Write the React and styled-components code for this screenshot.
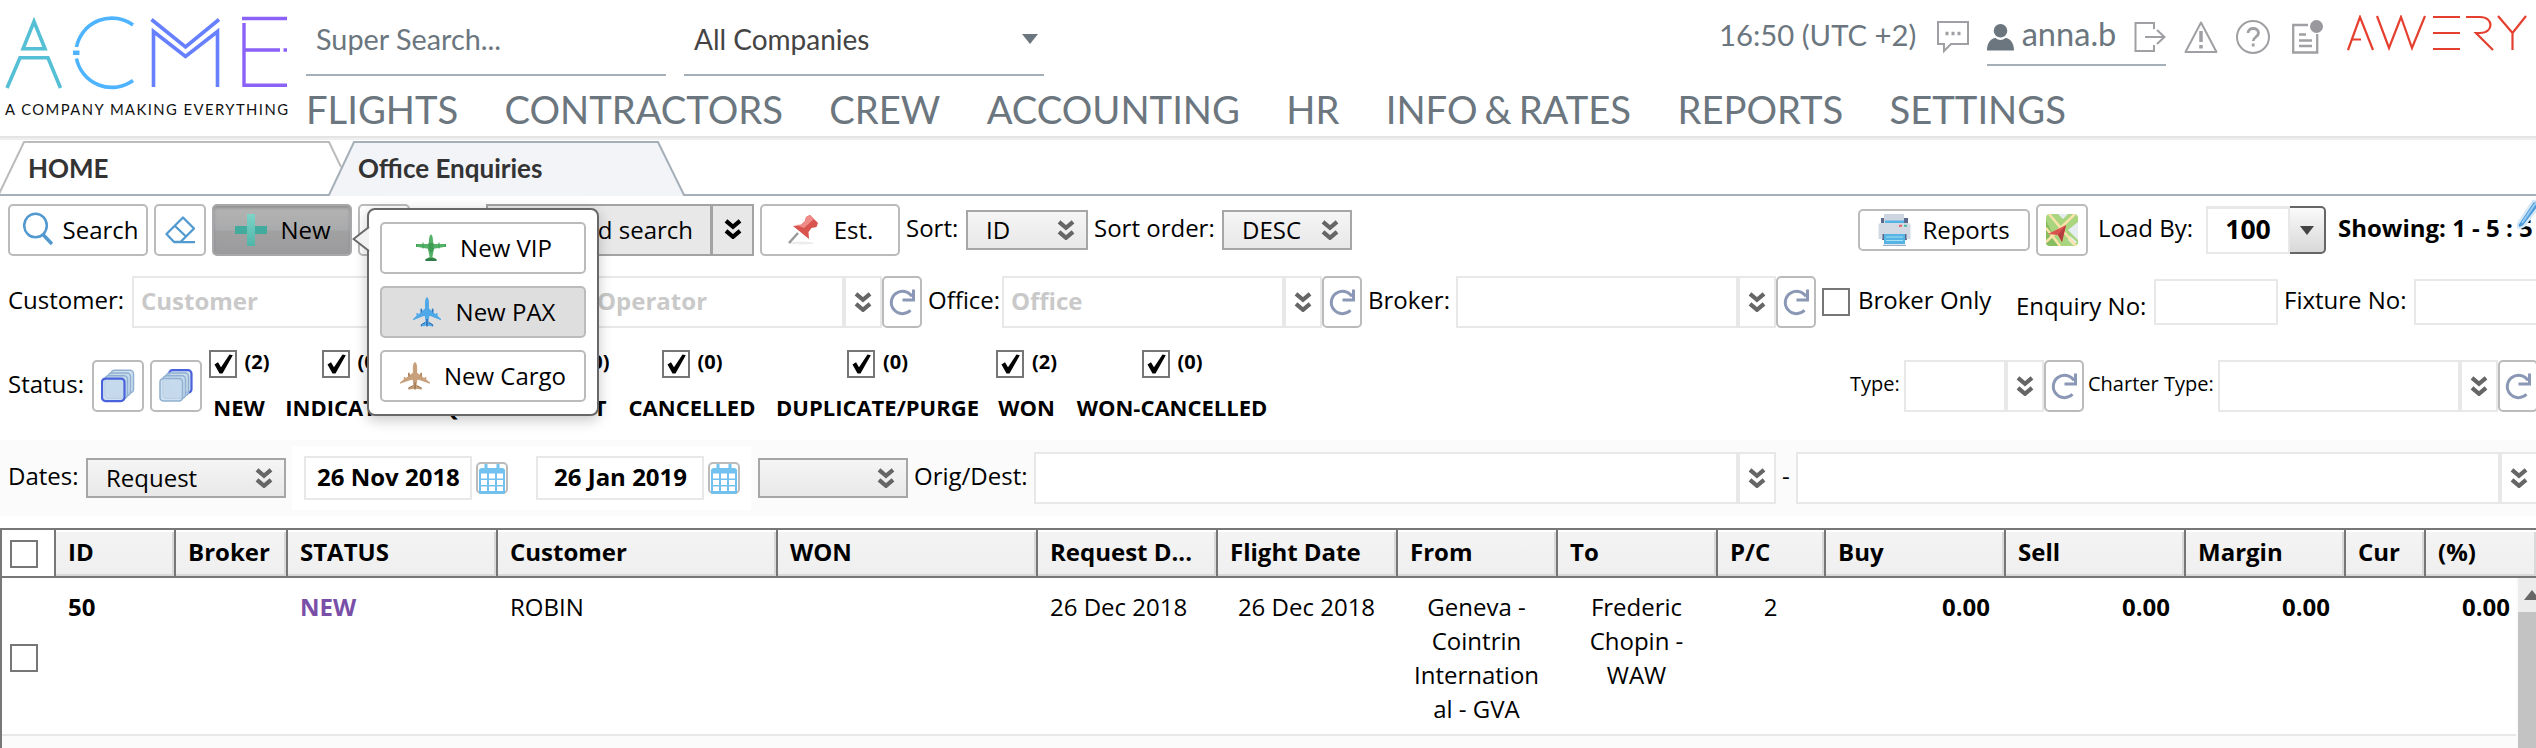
import styled, { createGlobalStyle, css } from "styled-components";

const GlobalStyle = createGlobalStyle`
    * {
        box-sizing: border-box;
    }
    body {
        margin: 0;
        background: #fff;
        color: #000;
        font-family: "Open Sans", "Noto Sans", sans-serif;
        font-size: 24px;
        overflow: hidden;
    }
    svg {
        display: block;
        flex: none;
    }
`;

const Page = styled.div`
    width: 2536px;
    height: 748px;
    overflow: hidden;
    display: flex;
    flex-direction: column;
`;

/* ---------- header ---------- */

const Header = styled.header`
    flex: none;
    display: flex;
    height: 140px;
    border-bottom: 2px solid #efefef;
    box-shadow: inset 0 -2px 0 #e4e4e4;
    font-family: Lato, sans-serif;
    color: #6b767e;
`;

const HeaderMain = styled.div`
    flex: 1;
    display: flex;
    flex-direction: column;
`;

const HeaderTop = styled.div`
    display: flex;
    height: 76px;
`;

const Field = styled.div`
    display: flex;
    align-items: center;
    justify-content: space-between;
    width: 360px;
    height: 76px;
    margin-right: 18px;
    padding: 4px 6px 0 10px;
    border-bottom: 2px solid #a5afb8;
    font-size: ${(p) => (p.$dark ? 28 : 28.8)}px;
    color: ${(p) => (p.$dark ? "#444" : "#6b767e")};
`;

const UserBar = styled.div`
    display: flex;
    margin-left: auto;
    padding-right: 9px;
    height: 66px;
    font-size: 29.3px;
`;

const Clock = styled.span`
    margin-top: 17px;
    line-height: 36px;
    width: 217px;
    white-space: nowrap;
`;

const User = styled.div`
    display: flex;
    justify-content: space-between;
    width: 179px;
    height: 66px;
    margin: 0 18px 0 17px;
    border-bottom: 2px solid #a5afb8;
`;

const UserName = styled.span`
    margin: 16px 0 0 -10px;
    font-size: 32.6px;
    line-height: 36px;
`;

const IconSlot = styled.div`
    width: ${(p) => p.$w}px;
    margin-right: ${(p) => p.$mr || 0}px;
    padding-top: ${(p) => p.$pt || 20}px;
`;

const Nav = styled.nav`
    display: flex;
    gap: 46.4px;
    font-size: 38.2px;
    line-height: 48px;
    margin-top: 9px;
    word-spacing: -2.8px;
    white-space: nowrap;
`;

const Tabs = styled.div`
    flex: none;
    position: relative;
    display: flex;
    height: 56px;
    font: 700 26px/30px Lato, sans-serif;
    color: #333;
    svg {
        position: absolute;
        left: 0;
        top: 0;
    }
`;

const Tab = styled.div`
    position: relative;
    width: ${(p) => p.$w}px;
    padding: 13px 0 0 28px;
`;

/* ---------- filter controls ---------- */

const Row = styled.div`
    flex: none;
    display: flex;
    align-items: center;
    height: ${(p) => p.$h}px;
    padding-left: 8px;
    ${(p) => p.$tint && "background: #fbfbfb;"}
    > * {
        flex: none;
    }
`;

const Label = styled.span`
    width: ${(p) => p.$w}px;
    margin-left: ${(p) => p.$ml || 0}px;
    padding-bottom: ${(p) => (p.$low ? 0 : 6)}px;
    ${(p) => p.$low && "padding-top: 6px;"}
    font-size: ${(p) => (p.$small ? 20 : 24)}px;
    white-space: nowrap;
`;

const Button = styled.button`
    display: flex;
    align-items: center;
    justify-content: center;
    gap: ${(p) => p.$gap || 0}px;
    width: ${(p) => p.$w}px;
    height: ${(p) => p.$h || 52}px;
    margin: 0 0 0 ${(p) => p.$ml || 0}px;
    padding: 0 0 1px ${(p) => p.$pl || 0}px;
    border: 2px solid #bbb;
    border-radius: 5px;
    background: #fff;
    color: #000;
    font: inherit;
    white-space: nowrap;
    ${(p) => p.$hover && "background: #dedede;"}
    ${(p) =>
        p.$pressed &&
        css`
            background: linear-gradient(#b4b4b4, #a9aaab 50%, #a1a1a2 52%, #9b9b9d);
            border-color: #a8a8aa;
            box-shadow: inset 0 2px 3px #8e8e90;
        `}
`;

const Select = styled.div`
    display: flex;
    align-items: center;
    justify-content: space-between;
    width: ${(p) => p.$w}px;
    height: 40px;
    margin-left: ${(p) => p.$ml || 0}px;
    padding: 0 11px 1px 18px;
    border: 2px solid #a6a6a6;
    background: linear-gradient(#f5f5f5, #e8e8e8);
`;

const SplitButton = styled.div`
    display: flex;
    margin-left: 76px;
    height: 52px;
    border: 2px solid #a3a3a3;
    background: #e8e8e8;
`;

const SplitPart = styled.div`
    display: flex;
    align-items: center;
    justify-content: center;
    width: ${(p) => p.$w}px;
    padding: 0 2px 2px 0;
    & + & {
        padding-right: 0;
        border-left: 3px solid #a3a3a3;
    }
`;

const Input = styled.div`
    display: flex;
    align-items: center;
    width: ${(p) => p.$w}px;
    height: ${(p) => p.$h || 52}px;
    margin-left: ${(p) => p.$ml || 0}px;
    padding: 0 0 3px ${(p) => p.$pl || 7}px;
    border: 2px solid #e8e8e8;
    background: #fff;
    font-weight: 700;
    white-space: nowrap;
    color: ${(p) => (p.$date ? "#000" : "#c9c9c9")};
`;

const Trigger = styled.div`
    display: flex;
    align-items: center;
    justify-content: center;
    width: 38px;
    height: 52px;
    padding-bottom: 1px;
    border: 2px solid #e8e8e8;
    background: #fff;
`;

const Check = styled.div`
    flex: none;
    width: 28px;
    height: 28px;
    margin-left: ${(p) => p.$ml || 0}px;
    border: 2px solid #767676;
    background: #fff;
`;

const NewWrap = styled.div`
    position: relative;
    margin-left: 6px;
`;

const Popup = styled.div`
    position: absolute;
    z-index: 5;
    left: 155px;
    top: 4px;
    display: flex;
    flex-direction: column;
    gap: 12px;
    width: 232px;
    height: 208px;
    padding: 12px 11px;
    border: 2px solid #68686b;
    border-radius: 8px;
    background: #fff;
    box-shadow: 0 4px 14px rgba(0, 0, 0, 0.22);
`;

const PopupArrow = styled.svg`
    position: absolute;
    left: -17px;
    top: 16px;
`;

const Combo = styled.div`
    display: flex;
    width: 120px;
    height: 48px;
    margin-left: 6px;
`;

const ComboValue = styled.div`
    display: flex;
    align-items: center;
    justify-content: center;
    width: 84px;
    padding-bottom: 3px;
    border: 2px solid #e8e8e8;
    border-top-width: 3px;
    font-size: 26.6px;
    font-weight: 700;
`;

const ComboArrow = styled.div`
    display: flex;
    align-items: center;
    justify-content: center;
    width: 36px;
    border: 2px solid #666;
    border-left: 0;
    border-radius: 0 5px 5px 0;
    background: linear-gradient(#fafafa, #d8d8d8);
`;

const Showing = styled.div`
    position: relative;
    width: 209px;
    margin-left: 12px;
    padding-bottom: 6px;
    font-weight: 700;
    white-space: nowrap;
    svg {
        position: absolute;
        right: 10px;
        top: -12px;
    }
`;

const StatusCell = styled.div`
    display: flex;
    flex-direction: column;
    align-items: center;
    gap: 14px;
    width: ${(p) => p.$w}px;
    padding-bottom: 1px;
    font-size: 22px;
    font-weight: 700;
    line-height: 30px;
    white-space: nowrap;
`;

const StatusCount = styled.div`
    display: flex;
    align-items: center;
    gap: 8px;
    height: 28px;
    font-size: 20px;
    line-height: 26px;
    > span {
        padding-bottom: 3px;
    }
`;

const DateGroup = styled.div`
    display: flex;
    align-items: center;
    width: 459px;
    height: 64px;
    margin-left: 6px;
    padding-left: 12px;
    background: #fff;
    > svg {
        margin-left: 4px;
    }
`;

/* ---------- table ---------- */

const COLS = "54px 120px 112px 210px 280px 260px 180px 180px 160px 160px 108px 180px 180px 160px 80px 1fr";

const Table = styled.div`
    flex: 1;
    display: flex;
    flex-direction: column;
    margin-top: 12px;
    border-top: 2px solid #777;
    border-left: 2px solid #777;
`;

const Head = styled.div`
    display: grid;
    grid-template-columns: ${COLS};
    height: 48px;
    border-bottom: 2px solid #777;
    font-weight: 700;
`;

const Th = styled.div`
    display: flex;
    align-items: center;
    padding: 0 0 3px 12px;
    border-right: 2px solid #777;
    background: linear-gradient(#f4f4f4, #efefef);
    box-shadow: inset 0 2px 0 #fff, inset -2px -2px 0 #d9d9d9;
    white-space: nowrap;
    &:first-child {
        padding: 2px 0 0 8px;
        background: #fff;
        box-shadow: none;
    }
    &:last-child {
        border-right: 0;
    }
`;

const Body = styled.div`
    flex: 1;
    display: flex;
    background: #fbfbfb;
`;

const BodyRow = styled.div`
    flex: 1;
    display: grid;
    grid-template-columns: ${COLS};
    height: 158px;
    border-bottom: 2px solid #e8e8e8;
    background: #fff;
`;

const Td = styled.div`
    padding: 12px ${(p) => p.$pr || 15}px 0 12px;
    line-height: 34px;
    text-align: ${(p) => p.$align || "left"};
    font-weight: ${(p) => (p.$bold ? 700 : 400)};
    color: ${(p) => p.$color || "#000"};
    white-space: pre-line;
`;

const CheckCell = styled.div`
    display: flex;
    align-items: center;
    padding: 4px 0 0 8px;
`;

const Scrollbar = styled.div`
    width: 18px;
    margin-left: 2px;
    background: #c3c3c3;
`;

const ScrollUp = styled.div`
    display: flex;
    align-items: center;
    justify-content: flex-end;
    overflow: hidden;
    height: 34px;
    background: #ececec;
`;

/* ---------- icons ---------- */

const Chevrons = ({ color = "#666" }) => (
    <svg width="18" height="20" viewBox="0 0 18 20" fill="none" stroke={color} strokeWidth="4.2">
        <path d="M2 1.8l7 6 7-6M2 11.8l7 6 7-6" />
    </svg>
);

const ReloadIcon = () => (
    <svg width="28" height="28" viewBox="0 0 28 28" fill="none" stroke="#8b98b5" strokeWidth="3">
        <path d="M22.5 22.3A11.2 11.2 0 1 1 24 8.5" />
        <path d="M25.5 1.5v10.6H14.5" />
    </svg>
);

const CheckMark = () => (
    <svg width="24" height="24" viewBox="0 0 24 24">
        <path d="M3.500 12.500l3.500-2.200 3 5L18.500 2.500l3.300.8L11.500 21.500H8.500z" fill="#000" />
    </svg>
);

const AcmeLogo = () => (
    <svg width="306" height="125" viewBox="0 0 306 125" fill="none" strokeWidth="3.6">
        <g stroke="#55bfd5">
            <path d="M23 48.800L34 21.500l11 27.300z" />
            <path d="M7 88l13-30.200h28L60.500 88" />
        </g>
        <g stroke="#4fb4ff">
            <path d="M133 25A36 36 0 0 0 76.500 47" />
            <path d="M133 80.500A36 36 0 0 1 76.500 58.500" />
            <path d="M73 52.800h6.500" strokeWidth="4.500" />
        </g>
        <g stroke="#6680ff">
            <path d="M151.500 19.500L185.500 47l33.500-27.500" />
            <path d="M153.500 87V31.500l32 25 32-25V87" />
        </g>
        <g stroke="#8a62f8">
            <path d="M242 18.500h45M244 23v64M244 50h36M283.500 50h3.500M244 85.200h43" strokeWidth="3.400" />
        </g>
        <text x="5" y="115" fill="#111" fontFamily="Lato" fontSize="14.8" textLength="283">
            A COMPANY MAKING EVERYTHING
        </text>
    </svg>
);

const AweryLogo = () => (
    <svg width="180" height="36" viewBox="0 0 180 36" fill="none" stroke="#e5402f" strokeWidth="2.200">
        <path d="M1 35L13 2l13 33M4 24.500h10M30 1l12 32L54 2l11 31L78 1" />
        <path d="M86 2h27M86 18h27M86 34h27" />
        <path d="M119 2h14c14 0 14 16 0 16h-4L146 35M151 1l14.500 17L179 1M165.500 17v18" />
    </svg>
);

const ChatIcon = () => (
    <svg width="34" height="34" viewBox="0 0 34 34" fill="none" stroke="#a0a0a4" strokeWidth="2">
        <path d="M2 2h30v22H15l-7 7v-7H2z" />
        <path d="M9.500 13.500h3M15.500 13.500h3M21.500 13.500h3" strokeWidth="3.500" />
    </svg>
);

const PersonIcon = () => (
    <svg width="27" height="27" viewBox="0 0 27 27" fill="#6b767e">
        <ellipse cx="13.500" cy="6.800" rx="6.800" ry="6.800" />
        <path d="M0 26.500c0-8 4-12 8.500-12.500 3 2.500 7 2.500 10 0C23 14.500 27 18.500 27 26.500z" />
    </svg>
);

const ExitIcon = () => (
    <svg width="32" height="34" viewBox="0 0 32 34" fill="none" stroke="#a0a0a4" strokeWidth="2">
        <path d="M20 9V3H1.500v28H20v-6M11 17h19M23 10l7.500 7-7.500 7" />
    </svg>
);

const WarnIcon = () => (
    <svg width="34" height="34" viewBox="0 0 34 34" fill="none" stroke="#a0a0a4" strokeWidth="2" strokeLinejoin="round">
        <path d="M17 2.500L32.500 32h-31z" />
        <path d="M17 11v11M17 25v3.500" strokeWidth="3.500" />
    </svg>
);

const HelpIcon = () => (
    <svg width="34" height="34" viewBox="0 0 34 34" fill="none" stroke="#a0a0a4" strokeWidth="2">
        <circle cx="17" cy="17" r="16" />
        <path d="M12 13c0-6 10.500-6 10.500 0 0 4-5.300 4-5.300 8M17.200 23.500v3" strokeWidth="2.800" />
    </svg>
);

const NotesIcon = () => (
    <svg width="31" height="34" viewBox="0 0 31 34" fill="none" stroke="#a0a0a4" strokeWidth="2.300">
        <path d="M16 5H1.200v27.500h24V14M7 14.500h7M7 20.500h13M7 26h13" />
        <circle cx="24.500" cy="6.500" r="6.500" fill="#98989d" stroke="none" />
    </svg>
);

const SearchIcon = () => (
    <svg width="30" height="36" viewBox="0 0 30 36" fill="none" stroke="#5299cf" strokeWidth="2.500">
        <ellipse cx="12.500" cy="13.500" rx="11.300" ry="11.800" />
        <path d="M20 22.500l9 9.500" strokeWidth="3.500" />
    </svg>
);

const EraserIcon = () => (
    <svg width="30" height="28" viewBox="0 0 30 28" fill="none" stroke="#5299cf" strokeWidth="2.300" strokeLinejoin="round">
        <path d="M18 1.500L29 12.500 15.500 26H9l-7.500-8zM9.500 9.500L21 20.500M9 26.200h21" />
    </svg>
);

const PlusIcon = () => (
    <svg width="32" height="32" viewBox="0 0 32 32">
        <defs>
            <linearGradient id="plus" x1="0" y1="0" x2="0" y2="1">
                <stop offset="0" stopColor="#7fd3c8" />
                <stop offset="1" stopColor="#4fb5a8" />
            </linearGradient>
        </defs>
        <path d="M12 0h8v12h12v8H20v12h-8V20H0v-8h12z" fill="url(#plus)" />
        <path d="M0 12h12v8H0zM20 12h12v8H20z" fill="#43aa9e" />
    </svg>
);

const PinIcon = () => (
    <svg width="34" height="32" viewBox="0 0 34 32">
        <ellipse cx="14" cy="29" rx="13" ry="1.500" fill="#ececec" />
        <path d="M11 19L2 29" stroke="#999" strokeWidth="2.500" />
        <path d="M19 3l4-2 8 8-1.500 4-5 1-3 4 .5 7L6 12l8-1 4-4z" fill="#d9534f" />
        <path d="M19 3l4-2 4 4-10 9-8-3 5-.5 4-3.500z" fill="#f08c88" />
    </svg>
);

const PrinterIcon = () => (
    <svg width="33" height="32" viewBox="0 0 33 32">
        <path d="M3 4h27v8H3zM4 18h25v8H4z" fill="#5a6a8c" />
        <path d="M6 0h20v9H6z" fill="#cdd6e0" />
        <path d="M7 6.500h19v3H7z" fill="#56b4e4" />
        <path d="M3 9h27a2.500 2.500 0 0 1 2.500 2.500V25h-4v-5h-24v5h-4V11.500A2.500 2.500 0 0 1 3 9z" fill="#d3dae3" />
        <path d="M21 10.800h3v2h-3z" fill="#e06060" />
        <path d="M26 10.800h3v2h-3z" fill="#49b9a5" />
        <path d="M6 20h21v10H6z" fill="#56b4e4" />
        <path d="M8 23h17M8 26.500h17" stroke="#a6e0f6" strokeWidth="1.200" />
        <path d="M5 31.300h23" stroke="#8fa6c0" strokeWidth="1.200" />
    </svg>
);

const MapIcon = () => (
    <svg width="32" height="32" viewBox="0 0 32 32">
        <clipPath id="mapClip">
            <rect width="32" height="32" rx="4" />
        </clipPath>
        <g clipPath="url(#mapClip)">
            <path d="M0 0h32v32H0z" fill="#a9d57e" />
            <path d="M0 6l12 26H0z" fill="#86bd5f" />
            <path d="M22 16l10-8v18zM12 0h10l-5 5zM24 22l7 6-4 3-5-5z" fill="#e6edf0" />
            <path d="M3 0l27 32M29 0L0 28M0 14l14 18" stroke="#fbe3a9" strokeWidth="2.500" />
            <path d="M20 11L2 20l10 1 4 7z" fill="#d9534f" />
            <path d="M20 11l-8 10 4 7z" fill="#b53f3c" />
        </g>
    </svg>
);

const PencilIcon = () => (
    <svg width="20" height="30" viewBox="0 0 20 30">
        <path d="M0 26L16 2h10L7 27l-5 2.500z" fill="#4a9ada" stroke="#d7e9f7" strokeWidth="2.500" />
        <path d="M5 24L20 2" stroke="#9acbf0" strokeWidth="2" />
    </svg>
);

const CalendarIcon = () => (
    <svg width="32" height="32" viewBox="0 0 32 32">
        <rect x="1" y="1" width="30" height="30" rx="4" fill="#fff" stroke="#bbb" strokeWidth="2" />
        <path d="M3 8a3 3 0 0 1 3-2h20a3 3 0 0 1 3 2v23a1 1 0 0 1-1 1H4a1 1 0 0 1-1-1z" fill="#72c1ee" />
        <path d="M8.500 2h3v6h-3zM20.500 2h3v6h-3z" fill="#72c1ee" />
        <path
            d="M5 11.500h6v5H5zM13 11.500h6v5h-6zM21 11.500h6v5h-6zM5 18h6v5H5zM13 18h6v5h-6zM21 18h6v5h-6zM5 24.500h6v4.500H5zM13 24.500h6v4.500h-6zM21 24.500h6v4.500h-6z"
            fill="#fff"
        />
    </svg>
);

const StackIcon = ({ front }) => {
    const marked = front ? 3 : 0;
    return (
        <svg width="34" height="34" viewBox="0 0 34 34">
            {[0, 1, 2, 3].map((i) => (
                <rect
                    key={i}
                    x={10 - i * 3}
                    y={1.2 + i * 2.8}
                    width="22.5"
                    height="22.5"
                    rx="3.5"
                    fill="#c6d9ec"
                    fillOpacity="0.8"
                    stroke={i === marked ? "#4a63dc" : "#8fb0d0"}
                    strokeWidth={i === marked ? 2.2 : 1.5}
                />
            ))}
        </svg>
    );
};

const PropPlane = () => (
    <svg width="30" height="28" viewBox="0 0 30 28">
        <path d="M15 .5c1.400 0 2 3.500 2.300 9.500H29.500v2.800l-11.500 2-1.600 8.200 4 2V27H9.600v-2l4-2L12 14.800.5 12.800V10h12.200C13 4 13.600.5 15 .5z" fill="#54b268" />
        <path d="M12.500 9h5v7l-2.500 3-2.500-3z" fill="#3f9c55" />
        <path d="M7 8.500v6M23 8.500v6M.5 10v3M29.500 10v3" stroke="#3f9c55" strokeWidth="1" />
        <path d="M9.600 27v-1.800l4-1.200h2.800l4 1.200V27z" fill="#2f7d46" />
    </svg>
);

const JetPlane = ({ color, shade, wide }) => (
    <svg width={wide ? 30 : 28} height={wide ? 28 : 30} viewBox="0 0 28 30" preserveAspectRatio="none">
        <path
            d="M14 0c1.300 1 2 3 2 6v5.500l2.800 2.500v-2.500h1.700V15.500l2.500 2V16h1.500v2.700L28 22v1.200l-10-4-1.800-.3-.7 5.600 4.300 3.500v1.500L14 28.600 8.200 29.500V28l4.300-3.500-.7-5.600-1.800.3-10 4V22l3.500-3.300V16H5v1.500l2.500-2V11.500h1.700V14l2.800-2.500V6c0-3 .7-5 2-6z"
            fill={color}
        />
        <path d="M14 22v7.500" stroke={shade} strokeWidth="1.400" />
        <path d="M8.300 29.200v-1.500l3.700-2.200M19.700 29.200v-1.500l-3.700-2.200M8.300 12v3.500M19.700 12v3.500" stroke={shade} strokeWidth="1" fill="none" />
    </svg>
);

/* ---------- data ---------- */

const NAV = ["FLIGHTS", "CONTRACTORS", "CREW", "ACCOUNTING", "HR", "INFO & RATES", "REPORTS", "SETTINGS"];

const STATUSES = [
    { name: "NEW", count: 2, w: 62 },
    { name: "INDICATION", count: 0, w: 164 },
    { name: "QUOTED", count: 0, w: 108 },
    { name: "LOST", count: 0, w: 74 },
    { name: "CANCELLED", count: 0, w: 152 },
    { name: "DUPLICATE/PURGE", count: 0, w: 219 },
    { name: "WON", count: 2, w: 79 },
    { name: "WON-CANCELLED", count: 0, w: 212 },
];

const HEADS = [
    "ID",
    "Broker",
    "STATUS",
    "Customer",
    "WON",
    "Request D...",
    "Flight Date",
    "From",
    "To",
    "P/C",
    "Buy",
    "Sell",
    "Margin",
    "Cur",
    "(%)",
];

const Lookup = ({ w, ml, text }) => (
    <>
        <Input $w={w} $ml={ml}>
            {text}
        </Input>
        <Trigger>
            <Chevrons />
        </Trigger>
    </>
);

const Reload = () => (
    <Button $w={40}>
        <ReloadIcon />
    </Button>
);

const App = () => (
    <Page>
        <GlobalStyle />
        <Header>
            <AcmeLogo />
            <HeaderMain>
                <HeaderTop>
                    <Field>Super Search...</Field>
                    <Field $dark>
                        All Companies
                        <svg width="16" height="10">
                            <path d="M0 0h16L8 10z" fill="#6b767e" />
                        </svg>
                    </Field>
                    <UserBar>
                        <Clock>16:50 (UTC +2)</Clock>
                        <IconSlot $w={34}>
                            <ChatIcon />
                        </IconSlot>
                        <User>
                            <IconSlot $w={27} $pt={24}>
                                <PersonIcon />
                            </IconSlot>
                            <UserName>anna.b</UserName>
                            <IconSlot $w={32}>
                                <ExitIcon />
                            </IconSlot>
                        </User>
                        <IconSlot $w={34} $mr={18}>
                            <WarnIcon />
                        </IconSlot>
                        <IconSlot $w={34} $mr={22}>
                            <HelpIcon />
                        </IconSlot>
                        <IconSlot $w={31} $mr={24}>
                            <NotesIcon />
                        </IconSlot>
                        <IconSlot $w={180} $pt={15}>
                            <AweryLogo />
                        </IconSlot>
                    </UserBar>
                </HeaderTop>
                <Nav>
                    {NAV.map((item) => (
                        <span key={item}>{item}</span>
                    ))}
                </Nav>
            </HeaderMain>
        </Header>

        <Tabs>
            <svg width="2536" height="56" fill="none" strokeWidth="2">
                <path d="M-1 54L24 2h305l12 25" stroke="#bbb" />
                <path d="M329 56L354 2h304l27 54z" fill="#f2f4f7" />
                <path d="M0 55h329L354 2h304l26 53h1852" stroke="#a5afb8" />
            </svg>
            <Tab $w={330}>HOME</Tab>
            <Tab $w={330}>Office Enquiries</Tab>
        </Tabs>

        <Row $h={68}>
            <Button $w={140} $gap={10} $pl={5}>
                <SearchIcon />
                Search
            </Button>
            <Button $w={52} $ml={6}>
                <EraserIcon />
            </Button>
            <NewWrap>
                <Button $w={140} $gap={13} $pl={2} $pressed>
                    <PlusIcon />
                    New
                </Button>
                <Popup>
                    <PopupArrow width="18" height="26" viewBox="0 0 18 26">
                        <path d="M17 1L1.500 13 17 25" fill="#f2f2f2" stroke="#68686b" strokeWidth="2" />
                    </PopupArrow>
                    <Button $w={206} $gap={14} $pl={2}>
                        <PropPlane />
                        New VIP
                    </Button>
                    <Button $w={206} $gap={15} $pl={2} $hover>
                        <JetPlane color="#4fa8e8" shade="#2d66b0" />
                        New PAX
                    </Button>
                    <Button $w={206} $gap={14}>
                        <JetPlane color="#c8a17c" shade="#9c7650" wide />
                        New Cargo
                    </Button>
                </Popup>
            </NewWrap>
            <Button $w={52} $ml={6} />
            <SplitButton>
                <SplitPart $w={222}>Advanced search</SplitPart>
                <SplitPart $w={42}>
                    <Chevrons color="#000" />
                </SplitPart>
            </SplitButton>
            <Button $w={140} $ml={6} $gap={13}>
                <PinIcon />
                Est.
            </Button>
            <Label $ml={6} $w={60}>
                Sort:
            </Label>
            <Select $w={122}>
                ID
                <Chevrons />
            </Select>
            <Label $ml={6} $w={128}>
                Sort order:
            </Label>
            <Select $w={130}>
                DESC
                <Chevrons />
            </Select>
            <Button $w={172} $h={42} $ml={506} $gap={11}>
                <PrinterIcon />
                Reports
            </Button>
            <Button $w={52} $ml={6}>
                <MapIcon />
            </Button>
            <Label $ml={10} $w={102}>
                Load By:
            </Label>
            <Combo>
                <ComboValue>100</ComboValue>
                <ComboArrow>
                    <svg width="14" height="9">
                        <path d="M0 0h14L7 9z" fill="#444" />
                    </svg>
                </ComboArrow>
            </Combo>
            <Showing>
                Showing: 1 - 5 : 5
                <PencilIcon />
            </Showing>
        </Row>

        <Row $h={76}>
            <Label $w={124}>Customer:</Label>
            <Lookup w={270} text="Customer" />
            <Reload />
            <Label $ml={6} $w={102}>
                Operator:
            </Label>
            <Lookup w={256} text="Operator" />
            <Reload />
            <Label $ml={6} $w={74}>
                Office:
            </Label>
            <Lookup w={282} text="Office" />
            <Reload />
            <Label $ml={6} $w={88}>
                Broker:
            </Label>
            <Lookup w={282} />
            <Reload />
            <Check $ml={6} />
            <Label $ml={8} $w={158}>
                Broker Only
            </Label>
            <Label $w={138} $low>
                Enquiry No:
            </Label>
            <Input $w={124} $h={46} />
            <Label $ml={6} $w={130}>
                Fixture No:
            </Label>
            <Input $w={140} $h={46} />
        </Row>

        <Row $h={92}>
            <Label $w={84}>Status:</Label>
            <Button $w={52}>
                <StackIcon front />
            </Button>
            <Button $w={52} $ml={6}>
                <StackIcon />
            </Button>
            <Label $w={6} />
            {STATUSES.map((s) => (
                <StatusCell key={s.name} $w={s.w}>
                    <StatusCount>
                        <Check>
                            <CheckMark />
                        </Check>
                        <span>({s.count})</span>
                    </StatusCount>
                    {s.name}
                </StatusCell>
            ))}
            <Label $small $ml={572} $w={54}>
                Type:
            </Label>
            <Lookup w={102} />
            <Reload />
            <Label $small $ml={4} $w={130}>
                Charter Type:
            </Label>
            <Lookup w={242} />
            <Reload />
        </Row>
        <Row $h={8} />

        <Row $h={76} $tint>
            <Label $w={78}>Dates:</Label>
            <Select $w={200}>
                Request
                <Chevrons />
            </Select>
            <DateGroup>
                <Input $w={168} $h={44} $pl={11} $date>
                    26 Nov 2018
                </Input>
                <CalendarIcon />
                <Input $w={168} $h={44} $ml={28} $pl={16} $date>
                    26 Jan 2019
                </Input>
                <CalendarIcon />
            </DateGroup>
            <Select $w={150} $ml={7}>
                <span />
                <Chevrons />
            </Select>
            <Label $ml={6} $w={120}>
                Orig/Dest:
            </Label>
            <Lookup w={704} />
            <Label $ml={6} $w={14}>
                -
            </Label>
            <Lookup w={704} />
        </Row>

        <Table>
            <Head>
                <Th>
                    <Check />
                </Th>
                {HEADS.map((h) => (
                    <Th key={h}>{h}</Th>
                ))}
            </Head>
            <Body>
                <BodyRow>
                    <CheckCell>
                        <Check />
                    </CheckCell>
                    <Td $bold>50</Td>
                    <Td />
                    <Td $bold $color="#7a4fa8">
                        NEW
                    </Td>
                    <Td>ROBIN</Td>
                    <Td />
                    <Td>26 Dec 2018</Td>
                    <Td $align="center">26 Dec 2018</Td>
                    <Td $align="center">{"Geneva -\nCointrin\nInternation\nal - GVA"}</Td>
                    <Td $align="center">{"Frederic\nChopin -\nWAW"}</Td>
                    <Td $align="center">2</Td>
                    <Td $align="right" $bold $pr={16}>
                        0.00
                    </Td>
                    <Td $align="right" $bold $pr={16}>
                        0.00
                    </Td>
                    <Td $align="right" $bold $pr={16}>
                        0.00
                    </Td>
                    <Td />
                    <Td $align="right" $bold $pr={6}>
                        0.00
                    </Td>
                </BodyRow>
                <Scrollbar>
                    <ScrollUp>
                        <svg width="12" height="10">
                            <path d="M0 10L8 0l8 10z" fill="#666" />
                        </svg>
                    </ScrollUp>
                </Scrollbar>
            </Body>
        </Table>
    </Page>
);

export default App;
